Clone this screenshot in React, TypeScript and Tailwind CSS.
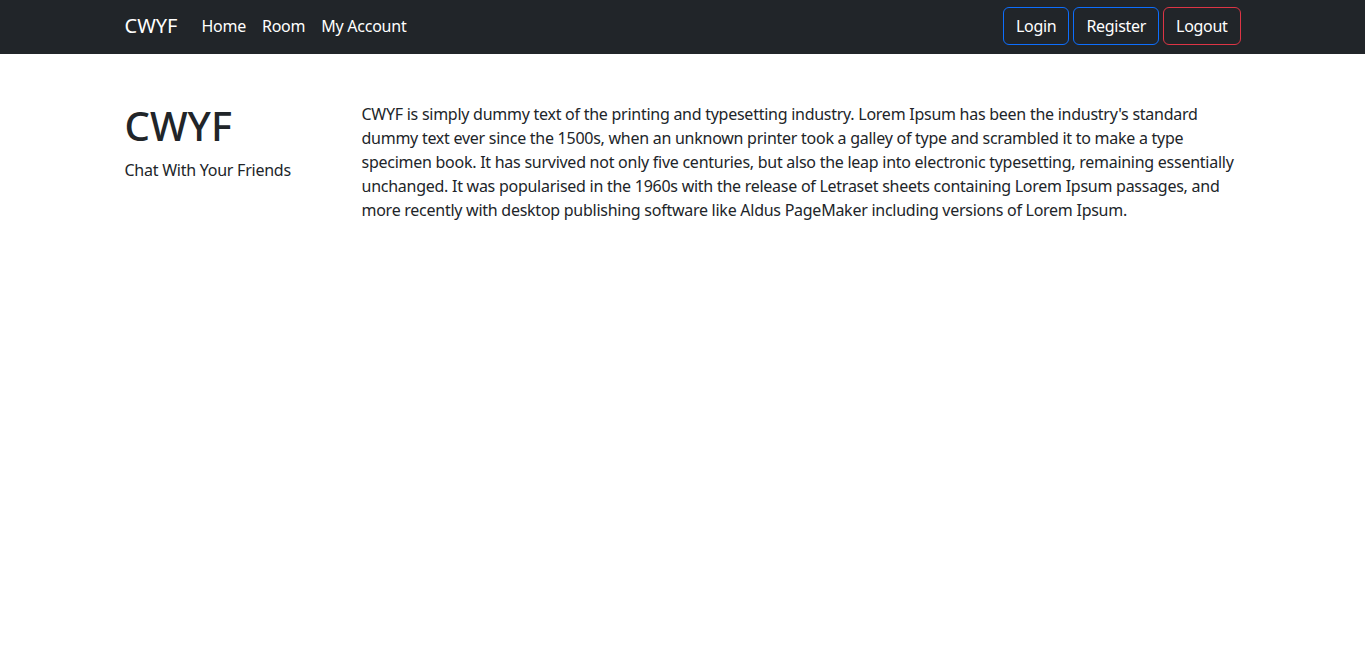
const font = { fontFamily: '"Noto Sans", "Open Sans", sans-serif' };

const Navbar = () => (
  <nav className="bg-[#212529] h-[54px]">
    <div className="max-w-[1140px] mx-auto px-3 h-full pb-[2px] flex items-center justify-between">
      <div className="flex items-center">
        <a className="text-[20px] text-white mr-6 leading-[30px]">CWYF</a>
        <div className="flex items-center gap-4 text-white text-[16px] tracking-[-0.25px]">
          <a>Home</a>
          <a>Room</a>
          <a>My Account</a>
        </div>
      </div>
      <div className="flex items-center gap-1 tracking-[-0.3px]">
        <button className="h-[38px] px-3 rounded-md border border-[#0d6efd] text-white text-[16px]">Login</button>
        <button className="h-[38px] px-3 rounded-md border border-[#0d6efd] text-white text-[16px]">Register</button>
        <button className="h-[38px] px-3 rounded-md border border-[#dc3545] text-white text-[16px]">Logout</button>
      </div>
    </div>
  </nav>
);

export default function App() {
  return (
    <div className="min-h-screen bg-white text-[#212529]" style={font}>
      <Navbar />
      <main className="max-w-[1140px] mx-auto px-3 pt-12 flex">
        <div className="w-[237px] shrink-0">
          <h1 className="text-[40px] font-medium leading-[48px] mb-2">CWYF</h1>
          <p className="text-[16px] leading-6 tracking-[-0.25px]">Chat With Your Friends</p>
        </div>
        <p className="text-[16px] leading-6 whitespace-nowrap tracking-[-0.26px]">
          CWYF is simply dummy text of the printing and typesetting industry. Lorem Ipsum has been the industry's standard
          <br />
          dummy text ever since the 1500s, when an unknown printer took a galley of type and scrambled it to make a type
          <br />
          specimen book. It has survived not only five centuries, but also the leap into electronic typesetting, remaining essentially
          <br />
          unchanged. It was popularised in the 1960s with the release of Letraset sheets containing Lorem Ipsum passages, and
          <br />
          more recently with desktop publishing software like Aldus PageMaker including versions of Lorem Ipsum.
        </p>
      </main>
    </div>
  );
}
